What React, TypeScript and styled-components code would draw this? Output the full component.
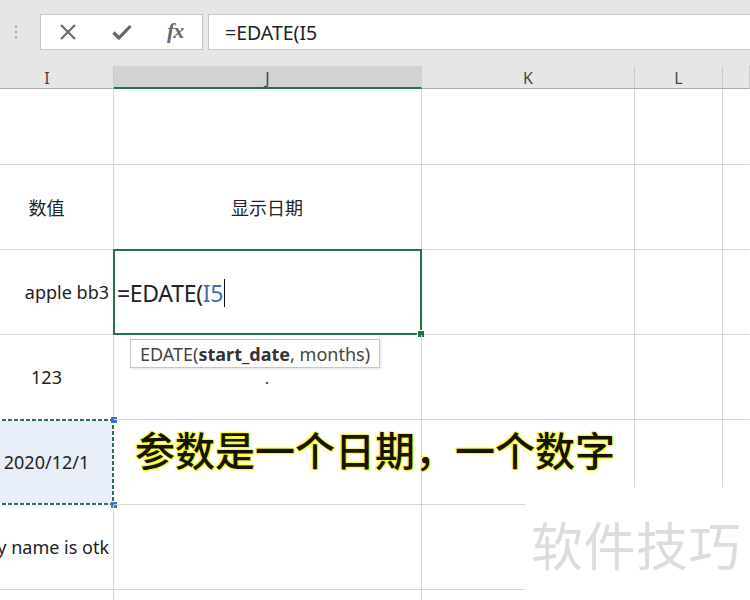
import React from "react";
import styled, { createGlobalStyle, css } from "styled-components";

const Global = createGlobalStyle`
  html, body { margin: 0; padding: 0; background: #ffffff; }
  body { font-family: "Noto Sans", "Noto Sans CJK SC", sans-serif; overflow: hidden; }
`;

const Page = styled.div`
  position: relative;
  width: 750px;
  height: 600px;
  overflow: hidden;
  background: #fff;
`;

const FormulaBar = styled.div`
  display: flex;
  align-items: center;
  height: 66px;
  padding: 14px 0 16px 0;
  box-sizing: border-box;
  background: #e6e6e6;
`;

const Grip = styled.div`
  width: 32px;
  margin-right: 8px;
  display: flex;
  flex-direction: column;
  align-items: center;
  gap: 3px;
  span { width: 2px; height: 2px; background: #a8a8a8; }
`;

const ControlBox = styled.div`
  width: 163px;
  height: 36px;
  box-sizing: border-box;
  background: #fff;
  border: 1px solid #c8c8c8;
  display: flex;
  align-items: center;
  padding-left: 18px;
  gap: 35px;
  color: #666;
`;

const Fx = styled.span`
  font-family: "Liberation Serif", "DejaVu Serif", serif;
  font-style: italic;
  font-weight: 700;
  font-size: 22px;
  color: #6a6a6a;
  letter-spacing: -1px;
  margin-top: -3px;
`;

const FormulaInput = styled.div`
  flex: 1;
  height: 36px;
  margin-left: 5px;
  margin-right: -4px;
  box-sizing: border-box;
  background: #fff;
  border: 1px solid #c8c8c8;
  display: flex;
  align-items: center;
  padding-left: 16px;
  font-size: 19.5px;
  color: #222;
`;

const Sheet = styled.div`
  display: grid;
  margin-left: -19px;
  grid-template-columns: 133px 308px 213px 88px 1fr;
  grid-auto-rows: 85px;
  grid-template-rows: 23px 76px;
`;

const ColHead = styled.div<{ $active?: boolean }>`
  background: ${(p) => (p.$active ? "#d2d2d2" : "#e6e6e6")};
  border-right: 1px solid ${(p) => (p.$active ? "#d2d2d2" : "#c9c9c9")};
  border-bottom: ${(p) => (p.$active ? "2px solid #217346" : "1px solid #ababab")};
  box-sizing: border-box;
  display: flex;
  align-items: center;
  justify-content: center;
  font-size: 16px;
  color: #444;
  padding-top: 2px;
`;

const Cell = styled.div<{ $align?: "left" | "center" | "right"; $copy?: boolean; $selected?: boolean; $noRight?: boolean }>`
  position: relative;
  box-sizing: border-box;
  border-right: 1px solid ${(p) => (p.$noRight ? "transparent" : "#d6d6d6")};
  border-bottom: 1px solid #d6d6d6;
  display: flex;
  align-items: center;
  justify-content: ${(p) => (p.$align === "left" ? "flex-start" : p.$align === "right" ? "flex-end" : "center")};
  padding: 0 4px 0 3px;
  font-size: 18px;
  color: #222;
  white-space: nowrap;
  overflow: hidden;
  ${(p) =>
    p.$copy &&
    css`
      background: #e8eef7;
      overflow: visible;
    `}
  ${(p) =>
    p.$selected &&
    css`
      overflow: visible;
      z-index: 2;
    `}
`;

const dashH = "repeating-linear-gradient(90deg, #2d6a6a 0 4px, #ffffff 4px 6px)";
const dashV = "repeating-linear-gradient(180deg, #2d6a6a 0 4px, #ffffff 4px 6px)";

const CopyMarquee = styled.div`
  position: absolute;
  left: -3px;
  top: -1px;
  right: -1px;
  bottom: -1px;
  pointer-events: none;
  background:
    ${dashH} top left / 100% 2px no-repeat,
    ${dashH} bottom left / 100% 2px no-repeat,
    ${dashV} top left / 2px 100% no-repeat,
    ${dashV} top right / 2px 100% no-repeat;
`;

const Handle = styled.div<{ $pos: "top" | "bottom" }>`
  position: absolute;
  right: -4px;
  ${(p) => (p.$pos === "top" ? "top: -3px;" : "bottom: -4px;")}
  width: 6px;
  height: 6px;
  background: #4472c4;
`;

const SelectBorder = styled.div`
  position: absolute;
  left: -1px;
  top: -1px;
  right: -1px;
  bottom: -1px;
  border: 2px solid #217346;
  pointer-events: none;
`;

const FillHandle = styled.div`
  position: absolute;
  right: -4px;
  bottom: -4px;
  width: 6px;
  height: 6px;
  background: #217346;
  border: 1px solid #fff;
  box-sizing: content-box;
`;

const EditText = styled.span`
  font-size: 23px;
  color: #222;
  letter-spacing: -0.3px;
  display: flex;
  align-items: center;
  margin-top: 2px;
`;

const Ref = styled.span`
  color: #3f6fae;
`;

const Caret = styled.span`
  display: inline-block;
  width: 1px;
  height: 28px;
  background: #111;
  margin-left: 1px;
`;

const Tooltip = styled.div`
  position: absolute;
  left: 16px;
  top: 4px;
  height: 29px;
  box-sizing: border-box;
  padding: 0 9px;
  display: flex;
  align-items: center;
  background: #fff;
  border: 1px solid #c6c6c6;
  box-shadow: 1px 1px 2px rgba(0, 0, 0, 0.12);
  font-size: 18px;
  color: #444;
  white-space: nowrap;
  b { font-weight: 700; color: #333; }
`;

const CellDot = styled.span`
  margin-top: 2px;
  font-size: 16px;
  color: #333;
`;

const Caption = styled.div`
  position: absolute;
  left: 135px;
  top: 424px;
  font-family: "Noto Sans CJK SC", "Noto Sans", sans-serif;
  font-size: 40px;
  font-weight: 500;
  line-height: 50px;
  color: #141400;
  text-shadow: 0 0 1px #ffff30, 0 0 2px #ffff30, 0 0 3px #ffff60, 1px 1px 1px #f0f000, -1px -1px 1px #f0f000;
  white-space: nowrap;
`;

const Watermark = styled.div`
  position: absolute;
  left: 525px;
  top: 487px;
  width: 225px;
  height: 113px;
  background: #fff;
  display: flex;
  align-items: center;
  padding-left: 6px;
  box-sizing: border-box;
  font-family: "Noto Sans CJK SC", sans-serif;
  font-size: 52px;
  color: #dcdcdc;
  white-space: nowrap;
  letter-spacing: 0.5px;
`;

const rows: { i: React.ReactNode; align?: "left" | "center" | "right"; j?: React.ReactNode; kind?: string }[] = [
  { i: "" },
  { i: "数值", j: "显示日期" },
  { i: "apple bb3", align: "right", kind: "edit" },
  { i: "123", kind: "tip" },
  { i: "2020/12/1", kind: "copy" },
  { i: "my name is otk", align: "right" },
  { i: "" },
];

export default function App() {
  return (
    <Page>
      <Global />
      <FormulaBar>
        <Grip>
          <span />
          <span />
          <span />
        </Grip>
        <ControlBox>
          <svg width="18" height="18" viewBox="0 0 18 18">
            <path d="M2 2 L16 16 M16 2 L2 16" stroke="#666" strokeWidth="2" fill="none" />
          </svg>
          <svg width="20" height="18" viewBox="0 0 20 18">
            <path d="M1.5 9.5 L7 15 L18.5 3" stroke="#666" strokeWidth="3.2" fill="none" strokeLinejoin="round" />
          </svg>
          <Fx>fx</Fx>
        </ControlBox>
        <FormulaInput>=EDATE(I5</FormulaInput>
      </FormulaBar>
      <Sheet>
        <ColHead>I</ColHead>
        <ColHead $active>J</ColHead>
        <ColHead>K</ColHead>
        <ColHead>L</ColHead>
        <ColHead />
        {rows.map((r, idx) => (
          <React.Fragment key={idx}>
            <Cell $align={r.align} $copy={r.kind === "copy"}>
              {r.i}
              {r.kind === "copy" && (
                <>
                  <CopyMarquee />
                  <Handle $pos="top" />
                  <Handle $pos="bottom" />
                </>
              )}
            </Cell>
            <Cell $selected={r.kind === "edit" || r.kind === "tip"} $align={r.kind === "edit" ? "left" : "center"}>
              {r.j}
              {r.kind === "edit" && (
                <>
                  <EditText>
                    =EDATE(<Ref>I5</Ref>
                    <Caret />
                  </EditText>
                  <SelectBorder />
                  <FillHandle />
                </>
              )}
              {r.kind === "tip" && (
                <>
                  <Tooltip>
                    EDATE(<b>start_date</b>, months)
                  </Tooltip>
                  <CellDot>.</CellDot>
                </>
              )}
            </Cell>
            <Cell />
            <Cell />
            <Cell $noRight />
          </React.Fragment>
        ))}
      </Sheet>
      <Caption>参数是一个日期，一个数字</Caption>
      <Watermark>软件技巧</Watermark>
    </Page>
  );
}
